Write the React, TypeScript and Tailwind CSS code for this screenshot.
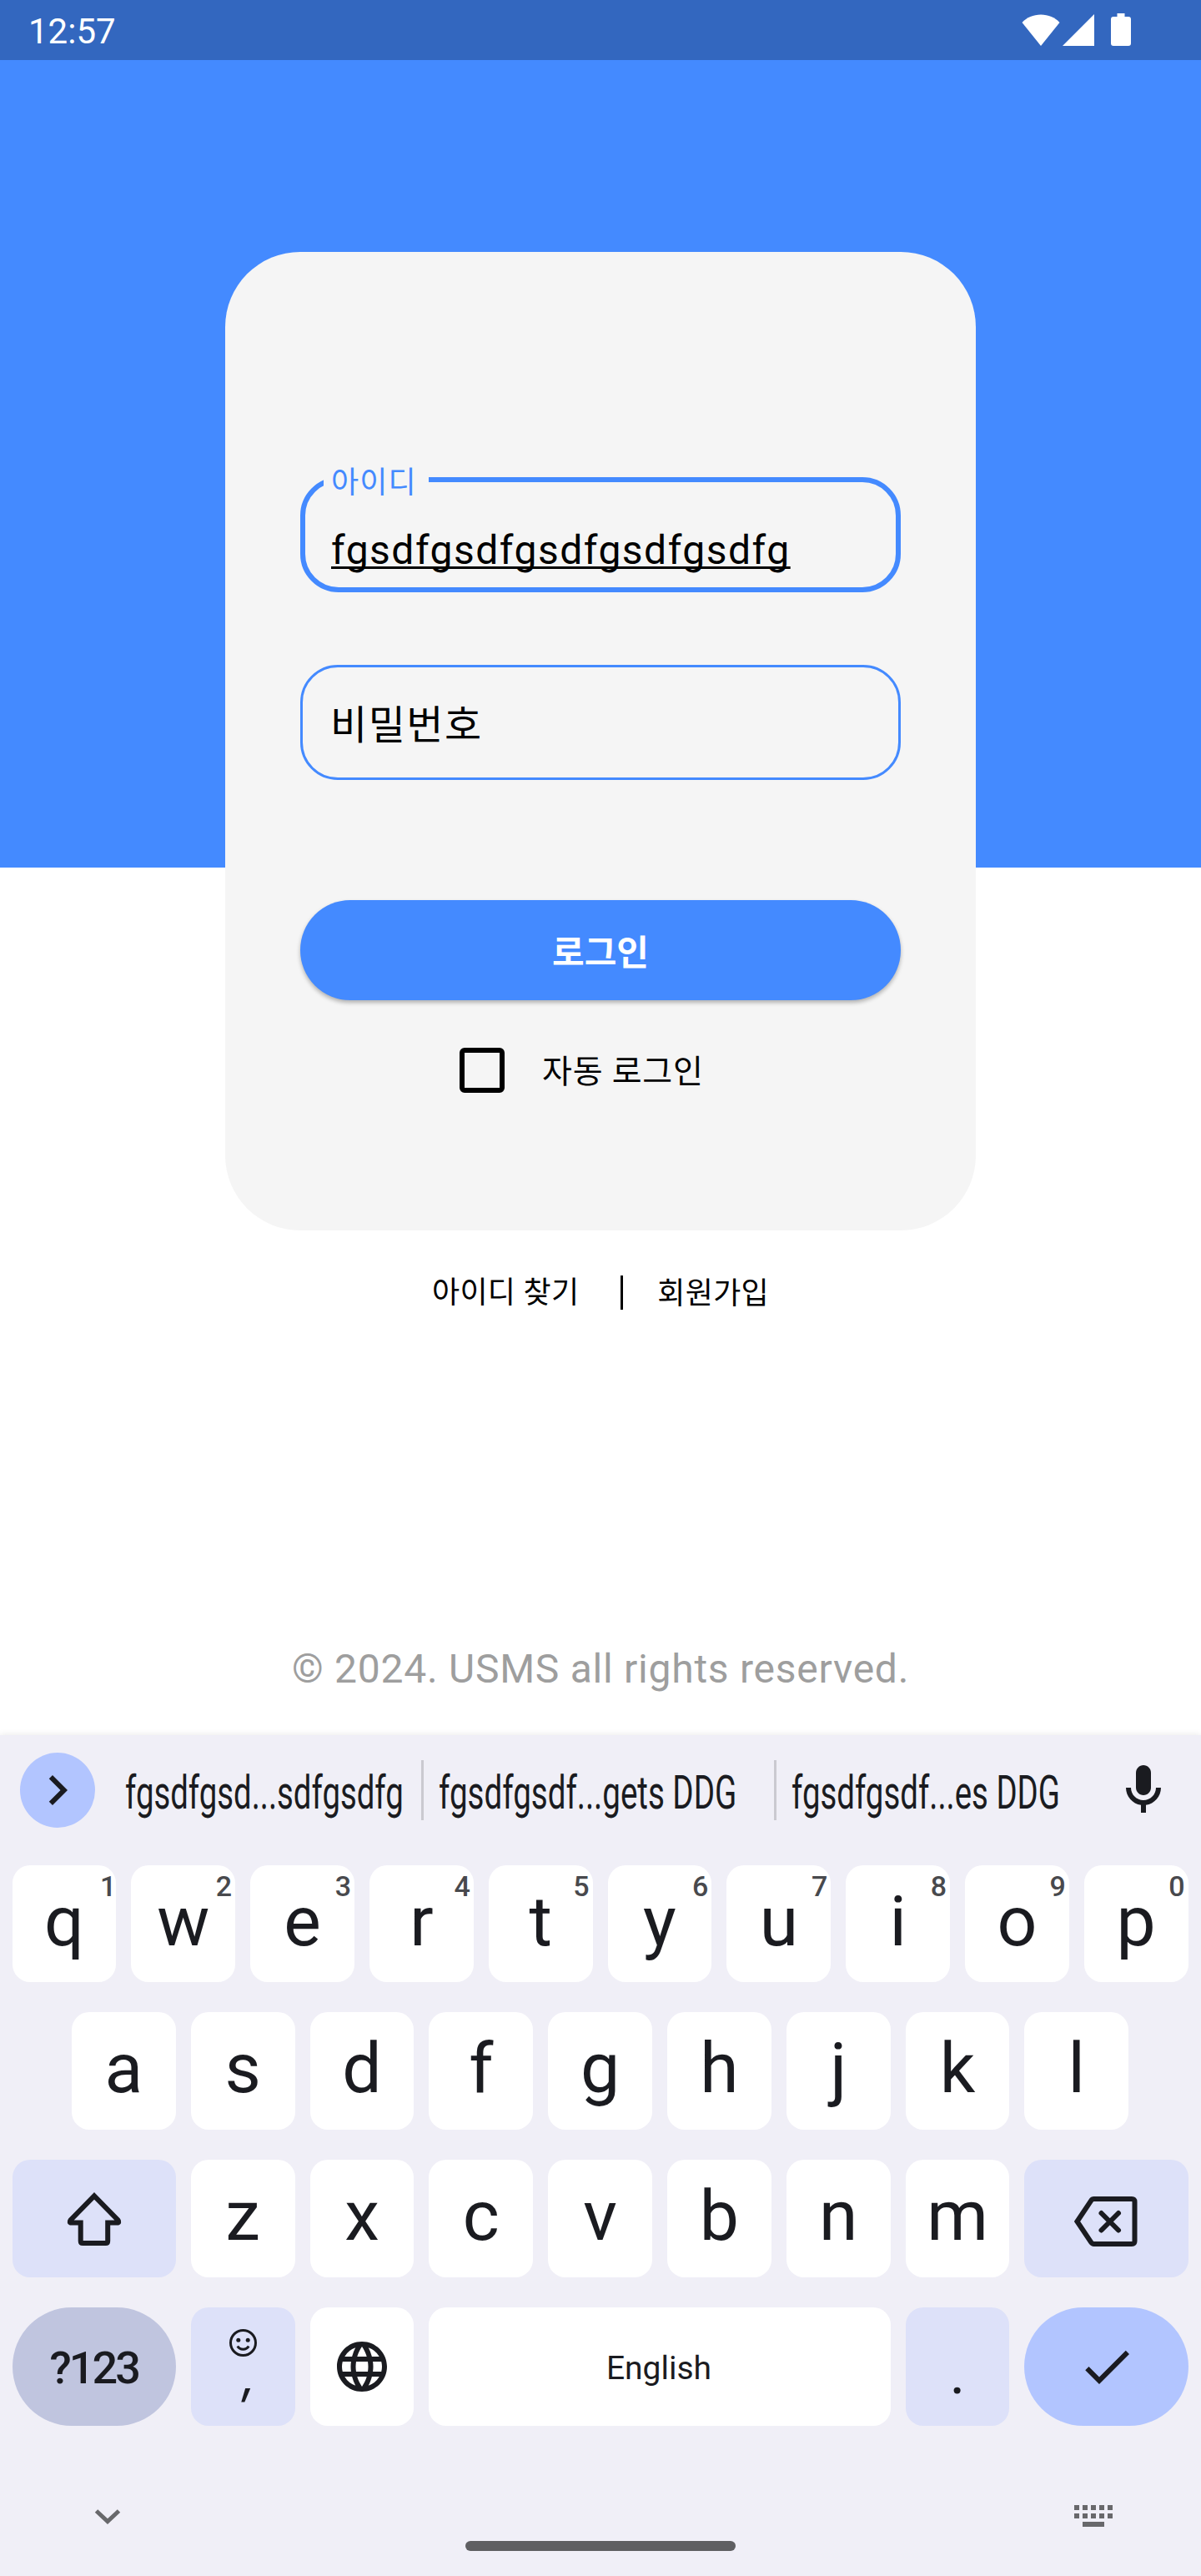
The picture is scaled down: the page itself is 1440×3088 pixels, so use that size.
import type { ReactNode } from "react";
import { MdCheck, MdLanguage } from "react-icons/md";

type KeyTone = "plain" | "soft" | "muted" | "accent";

const toneClass: Record<KeyTone, string> = {
  plain: "bg-white rounded-[21px]",
  soft: "bg-[#dde1f9] rounded-[21px]",
  muted: "bg-[#c0c5df] rounded-full",
  accent: "bg-[#b2c5ff] rounded-full",
};

function Key({ tone = "plain", span = "col-span-2", hint, children }: { tone?: KeyTone; span?: string; hint?: string; children: ReactNode }) {
  return (
    <div className={`relative flex items-center justify-center ${toneClass[tone]} ${span}`}>
      {hint && (
        <span className={`absolute top-[5px] text-[34px] leading-[40px] font-medium text-[#48494d] ${hint === "1" ? "right-0" : "right-[4px]"}`}>{hint}</span>
      )}
      {children}
    </div>
  );
}

function Letter({ children }: { children: string }) {
  return <span className="pb-[5px] text-[84px] leading-[100px]">{children}</span>;
}

function StatusBar() {
  return (
    <header className="flex h-[72px] items-center justify-between bg-[#3367bf] pl-[34px] pr-[84px] text-white">
      <span className="pt-[3px] text-[42px] leading-[50px]">12:57</span>
      <div className="flex items-start">
        <svg width="46" height="38" viewBox="0 0 46 38" fill="currentColor">
          <path d="M23 38 0.5 10C6 4 14 0.5 23 0.5S40 4 45.500 10Z" />
        </svg>
        <svg className="ml-[3px]" width="38" height="38" viewBox="0 0 38 38" fill="currentColor">
          <path d="M38 0V38H0Z" />
        </svg>
        <svg className="ml-[20px] -mt-px" width="24" height="39" viewBox="0 0 24 39" fill="currentColor">
          <path d="M7.500 0h9v4H21a3 3 0 0 1 3 3v29a3 3 0 0 1-3 3H3a3 3 0 0 1-3-3V7a3 3 0 0 1 3-3h4.500Z" />
        </svg>
      </div>
    </header>
  );
}

function LoginCard() {
  return (
    <section className="mx-auto flex h-[1173px] w-[900px] flex-col rounded-[90px] bg-[#f5f5f5] px-[90px] pt-[270px]">
      <div className="relative h-[138px] rounded-[46px] border-[6px] border-[#448aff] pl-[31px] pt-[54px]">
        <span className="absolute -top-[25px] left-[22px] h-[52px] w-[126px] bg-[#f5f5f5] pl-[9px] text-[36px] leading-[52px] tracking-[1.1px] text-[#448aff]">아이디</span>
        <span className="text-[48px] leading-[56px] tracking-[1.5px] underline decoration-[3px] underline-offset-[3px] [text-decoration-skip-ink:none]">fgsdfgsdfgsdfgsdfgsdfg</span>
      </div>
      <div className="mt-[87px] flex h-[138px] items-center rounded-[45px] border-[3px] border-[#448aff] pl-[33px] pt-[8px] text-[48px] tracking-[1.5px]">
        <span className="leading-[72px]">비밀번호</span>
      </div>
      <button className="mt-[144px] h-[120px] rounded-full bg-[#448aff] pt-[8px] text-[42px] leading-[60px] font-bold text-white shadow-[0_3px_5px_rgba(0,0,0,0.28)]">로그인</button>
      <div className="mt-[57px] flex h-[54px] items-center pl-[191px]">
        <span className="size-[54px] rounded-[6px] border-[6px] border-black" />
        <span className="ml-[45px] pt-[3px] text-[39px] leading-[54px] tracking-[0.75px]">자동 로그인</span>
      </div>
    </section>
  );
}

function Suggestions() {
  return (
    <div className="flex h-[156px] items-start pt-[21px]">
      <div className="ml-[24px] flex size-[90px] shrink-0 items-center justify-center rounded-full bg-[#b2c5ff]">
        <svg width="72" height="72" viewBox="0 0 24 24" fill="currentColor">
          <path d="M10 6 8.590 7.410 13.170 12l-4.580 4.590L10 18l6-6z" />
        </svg>
      </div>
      <div className="mt-[9px] flex h-[72px] w-[1221px] items-center whitespace-nowrap text-[56px] leading-[72px]">
        <div className="w-[391px] pl-[36px] pt-[6px]"><span className="inline-block origin-left scale-x-[0.685]">fgsdfgsd...sdfgsdfg</span></div>
        <div className="h-full w-[3px] shrink-0 bg-[#cac9d0]" />
        <div className="w-[420px] pl-[18px] pt-[6px]"><span className="inline-block origin-left scale-x-[0.688]">fgsdfgsdf...gets DDG</span></div>
        <div className="h-full w-[3px] shrink-0 bg-[#cac9d0]" />
        <div className="w-[404px] pl-[18px] pt-[6px]"><span className="inline-block origin-left scale-x-[0.686]">fgsdfgsdf...es DDG</span></div>
      </div>
      <svg className="mt-[9px] shrink-0" width="72" height="72" viewBox="0 0 24 24" fill="currentColor">
        <path d="M12 14c1.660 0 3-1.340 3-3V5c0-1.660-1.340-3-3-3S9 3.340 9 5v6c0 1.660 1.340 3 3 3z" />
        <path d="M17 11c0 2.760-2.240 5-5 5s-5-2.240-5-5H5c0 3.530 2.610 6.430 6 6.920V21h2v-3.080c3.390-.49 6-3.390 6-6.920z" />
      </svg>
    </div>
  );
}

const topRow: [string, string][] = [
  ["q", "1"], ["w", "2"], ["e", "3"], ["r", "4"], ["t", "5"],
  ["y", "6"], ["u", "7"], ["i", "8"], ["o", "9"], ["p", "0"],
];

function Keyboard() {
  return (
    <section className="h-[1008px] bg-[#f0eff7] font-[Roboto,sans-serif] text-[#1a1b20] shadow-[0_0_8px_rgba(0,0,0,0.10)]">
      <Suggestions />
      <div className="grid grid-cols-20 grid-rows-[140px_141px_141px_142px] gap-x-[18px] gap-y-[36px] pl-[14.6px] pr-[15.4px]">
        {topRow.map(([letter, hint]) => (
          <Key key={letter} hint={hint}><Letter>{letter}</Letter></Key>
        ))}
        {[..."asdfghjkl"].map((letter) => (
          <Key key={letter} span={letter === "a" ? "col-start-2 col-end-4" : "col-span-2"}><Letter>{letter}</Letter></Key>
        ))}
        <Key tone="soft" span="col-start-1 col-end-4">
          <svg width="68" height="64" viewBox="0 0 68 64" fill="none" stroke="currentColor" strokeWidth="6">
            <path d="M34 4.300 62.500 33.500Q64.500 36.500 61.500 36.500H50.200V58.500Q50.200 61 47.700 61H20.200Q17.700 61 17.700 58.500V36.500H6.500Q3.500 36.500 5.500 33.500Z" />
          </svg>
        </Key>
        {[..."zxcvbnm"].map((letter) => (
          <Key key={letter}><Letter>{letter}</Letter></Key>
        ))}
        <Key tone="soft" span="col-span-3">
          <svg className="mr-[2px] mt-[6px]" width="76" height="60" viewBox="0 0 76 60" fill="none" stroke="currentColor" strokeWidth="6">
            <path d="M3.500 30 20.300 4.800Q21.500 3 23.500 3H69Q72.500 3 72.500 6.500V53.500Q72.500 57 69 57H23.500Q21.500 57 20.300 55.200Z" />
            <path d="M32.500 20 53 40.500M53 20 32.500 40.500" strokeLinecap="round" />
          </svg>
        </Key>

        <Key tone="muted" span="col-span-3"><span className="pt-[4px] text-[54px] leading-[64px] font-medium tracking-[-3px]">?123</span></Key>
        <Key tone="soft">
          <div className="flex h-full w-full flex-col items-center pt-[26px]">
            <svg width="33" height="33" viewBox="0 0 33 33" fill="none" stroke="currentColor" strokeWidth="3">
              <circle cx="16.500" cy="16.500" r="15" />
              <circle cx="10.800" cy="13.200" r="2.500" fill="currentColor" stroke="none" />
              <circle cx="22.200" cy="13.200" r="2.500" fill="currentColor" stroke="none" />
              <path d="M9.800 20.500Q12 24.200 16.500 24.200T23.200 20.500" />
            </svg>
            <span className="-mt-[10px] ml-[14px] inline-block -skew-x-[8deg] font-[Inter,sans-serif] text-[60px] leading-[64px]">,</span>
          </div>
        </Key>
        <Key><MdLanguage size={72} /></Key>
        <Key span="col-span-8"><span className="pr-[2px] pt-[4px] text-[39px] leading-[48px]">English</span></Key>
        <Key tone="soft"><span className="pt-[16px] text-[72px] leading-[84px]">.</span></Key>
        <Key tone="accent" span="col-span-3"><MdCheck size={72} /></Key>
      </div>
      <div className="flex items-start justify-between pl-[113px] pr-[106px] pt-[95px] text-[#68686b]">
        <svg className="mt-[5px]" width="32" height="18" viewBox="0 0 32 18" fill="none" stroke="currentColor" strokeWidth="5">
          <path d="M2.500 2 16 14.500 29.500 2" />
        </svg>
        <div className="ml-[6px] mt-[43px] h-[12px] w-[324px] rounded-full bg-[#5f5f62]" />
        <svg width="46" height="26" viewBox="0 0 46 26" fill="currentColor">
          {[0, 10, 20, 30, 40].map((x) => (
            <path key={x} d={`M${x} 0h6v6h-6zM${x} 10h6v6h-6z`} />
          ))}
          <path d="M10 20h26v6H10z" />
        </svg>
      </div>
    </section>
  );
}

export default function App() {
  return (
    <div className="h-[3088px] w-[1440px] overflow-hidden bg-white font-[Roboto,'Noto_Sans_CJK_KR',sans-serif] text-black">
      <StatusBar />
      <main className="h-[2008px] bg-[linear-gradient(#448aff_968px,#ffffff_968px)] pt-[230px]">
        <LoginCard />
        <div className="mt-[47px] flex h-[54px] items-center pl-[518px] text-[36px] leading-[54px]">
          <span className="pt-[2px] tracking-[0.3px]">아이디 찾기</span>
          <span className="ml-[50px] h-[41px] w-[3px] bg-black" />
          <span className="ml-[41px] pt-[3px] tracking-[0.3px]">회원가입</span>
        </div>
        <p className="mt-[397px] text-center text-[48px] leading-[56px] tracking-[0.75px] text-[#9e9e9e]">© 2024. USMS all rights reserved.</p>
      </main>
      <Keyboard />
    </div>
  );
}
